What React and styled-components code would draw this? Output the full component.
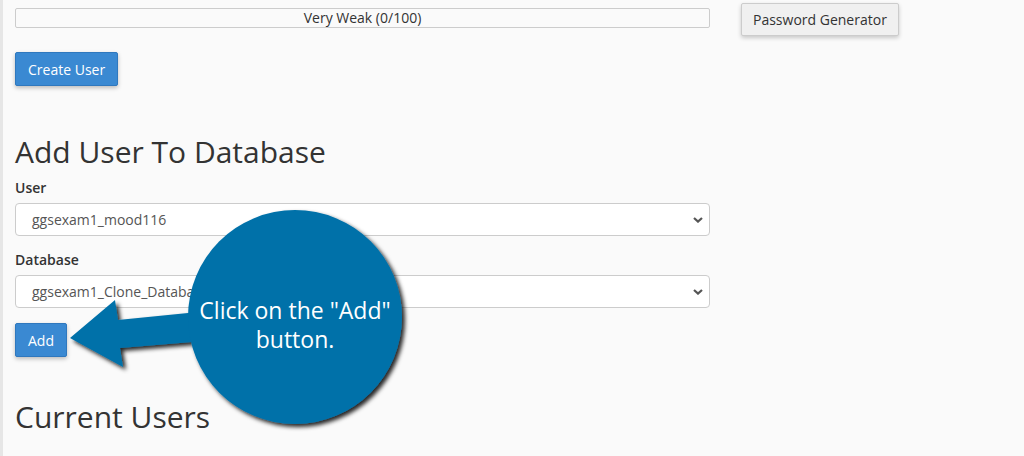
import React from "react";
import styled, { createGlobalStyle } from "styled-components";

const GlobalStyle = createGlobalStyle`
  html, body {
    margin: 0;
    padding: 0;
    background: #fafafa;
    overflow: hidden;
  }
  body {
    font-family: "Open Sans", "Liberation Sans", sans-serif;
    color: #333;
  }
`;

function Chevron() {
  return (
    <svg width="10" height="6" viewBox="0 0 10 6">
      <path d="M1 1 L5 4.6 L9 1" fill="none" stroke="#555" strokeWidth="2.2" />
    </svg>
  );
}

function App() {
  return (
    <Page>
      <GlobalStyle />
      <Form>
        <StrengthRow>
          <Meter>Very Weak (0/100)</Meter>
          <Button>Password Generator</Button>
        </StrengthRow>
        <PrimaryButton>Create User</PrimaryButton>

        <Heading $top={49}>Add User To Database</Heading>
        <Label>User</Label>
        <SelectBox>
          <span>ggsexam1_mood116</span>
          <Chevron />
        </SelectBox>
        <Label>Database</Label>
        <SelectBox>
          <span>ggsexam1_Clone_Database</span>
          <Chevron />
        </SelectBox>
        <PrimaryButton $small>Add</PrimaryButton>

        <Heading $top={43}>Current Users</Heading>
      </Form>

      <Callout>
        <svg width="360" height="240" viewBox="0 0 360 240">
          <defs>
            <filter id="shade" x="-10%" y="-10%" width="130%" height="130%">
              <feDropShadow dx="3" dy="3" stdDeviation="2" floodColor="#000" floodOpacity="0.85" />
            </filter>
          </defs>
          <g filter="url(#shade)" fill="#0071a9">
            <polygon points="12,138 57,100 60,120 170,109 170,139 62,148 65,167" />
            <circle cx="237" cy="117" r="107" />
          </g>
        </svg>
        <CalloutText>
          Click on the "Add"
          <br />
          button.
        </CalloutText>
      </Callout>
    </Page>
  );
}

export default App;

const Page = styled.div`
  position: relative;
  height: 456px;
  border-left: 3px solid #e6e6e6;
  padding: 0 0 0 12px;
  box-sizing: border-box;
`;

const Form = styled.div`
  width: 695px;
  display: flex;
  flex-direction: column;
  align-items: flex-start;
`;

const StrengthRow = styled.div`
  display: flex;
  align-items: flex-start;
  gap: 31px;
  padding-top: 3px;
  margin-bottom: 16px;
`;

const Meter = styled.div`
  width: 695px;
  height: 20px;
  margin-top: 5px;
  box-sizing: border-box;
  border: 1px solid #ccc;
  border-radius: 2px;
  font-size: 14px;
  line-height: 18px;
  text-align: center;
  color: #333;
`;

const Button = styled.button`
  flex-shrink: 0;
  height: 33px;
  padding: 0 11px;
  font-family: "Open Sans", "Liberation Sans", sans-serif;
  font-size: 14px;
  color: #333;
  background: #f0f0f0;
  border: 1px solid #ccc;
  border-radius: 2px;
  box-shadow: 0 2px 4px rgba(0, 0, 0, 0.2);
  white-space: nowrap;
`;

const PrimaryButton = styled.button`
  height: 34px;
  padding: 0 12px;
  font-family: "Open Sans", "Liberation Sans", sans-serif;
  font-size: 14px;
  color: #fff;
  background: #3a89d2;
  border: 1px solid #2f78be;
  border-radius: 2px;
  box-shadow: 0 2px 4px rgba(0, 0, 0, 0.25);
  margin-top: ${(p) => (p.$small ? "15px" : "0")};
`;

const Heading = styled.h2`
  margin: ${(p) => p.$top}px 0 10px;
  font-size: 30px;
  font-weight: 400;
  line-height: 33px;
  color: #333;
`;

const Label = styled.label`
  font-size: 14px;
  font-weight: 600;
  line-height: 20px;
  margin-bottom: 5px;
  color: #333;
`;

const SelectBox = styled.div`
  width: 100%;
  height: 33px;
  box-sizing: border-box;
  display: flex;
  align-items: center;
  justify-content: space-between;
  padding: 0 6px 0 16px;
  margin-bottom: 14px;
  background: #fff;
  border: 1px solid #ccc;
  border-radius: 4px;
  font-size: 14px;
  color: #555;

  &:last-of-type {
    margin-bottom: 0;
  }
`;

const Callout = styled.div`
  position: absolute;
  left: 55px;
  top: 200px;
  width: 360px;
  height: 240px;

  svg {
    display: block;
  }
`;

const CalloutText = styled.div`
  position: absolute;
  left: 130px;
  top: 96px;
  width: 214px;
  text-align: center;
  color: #fff;
  font-size: 23px;
  line-height: 29px;
`;
